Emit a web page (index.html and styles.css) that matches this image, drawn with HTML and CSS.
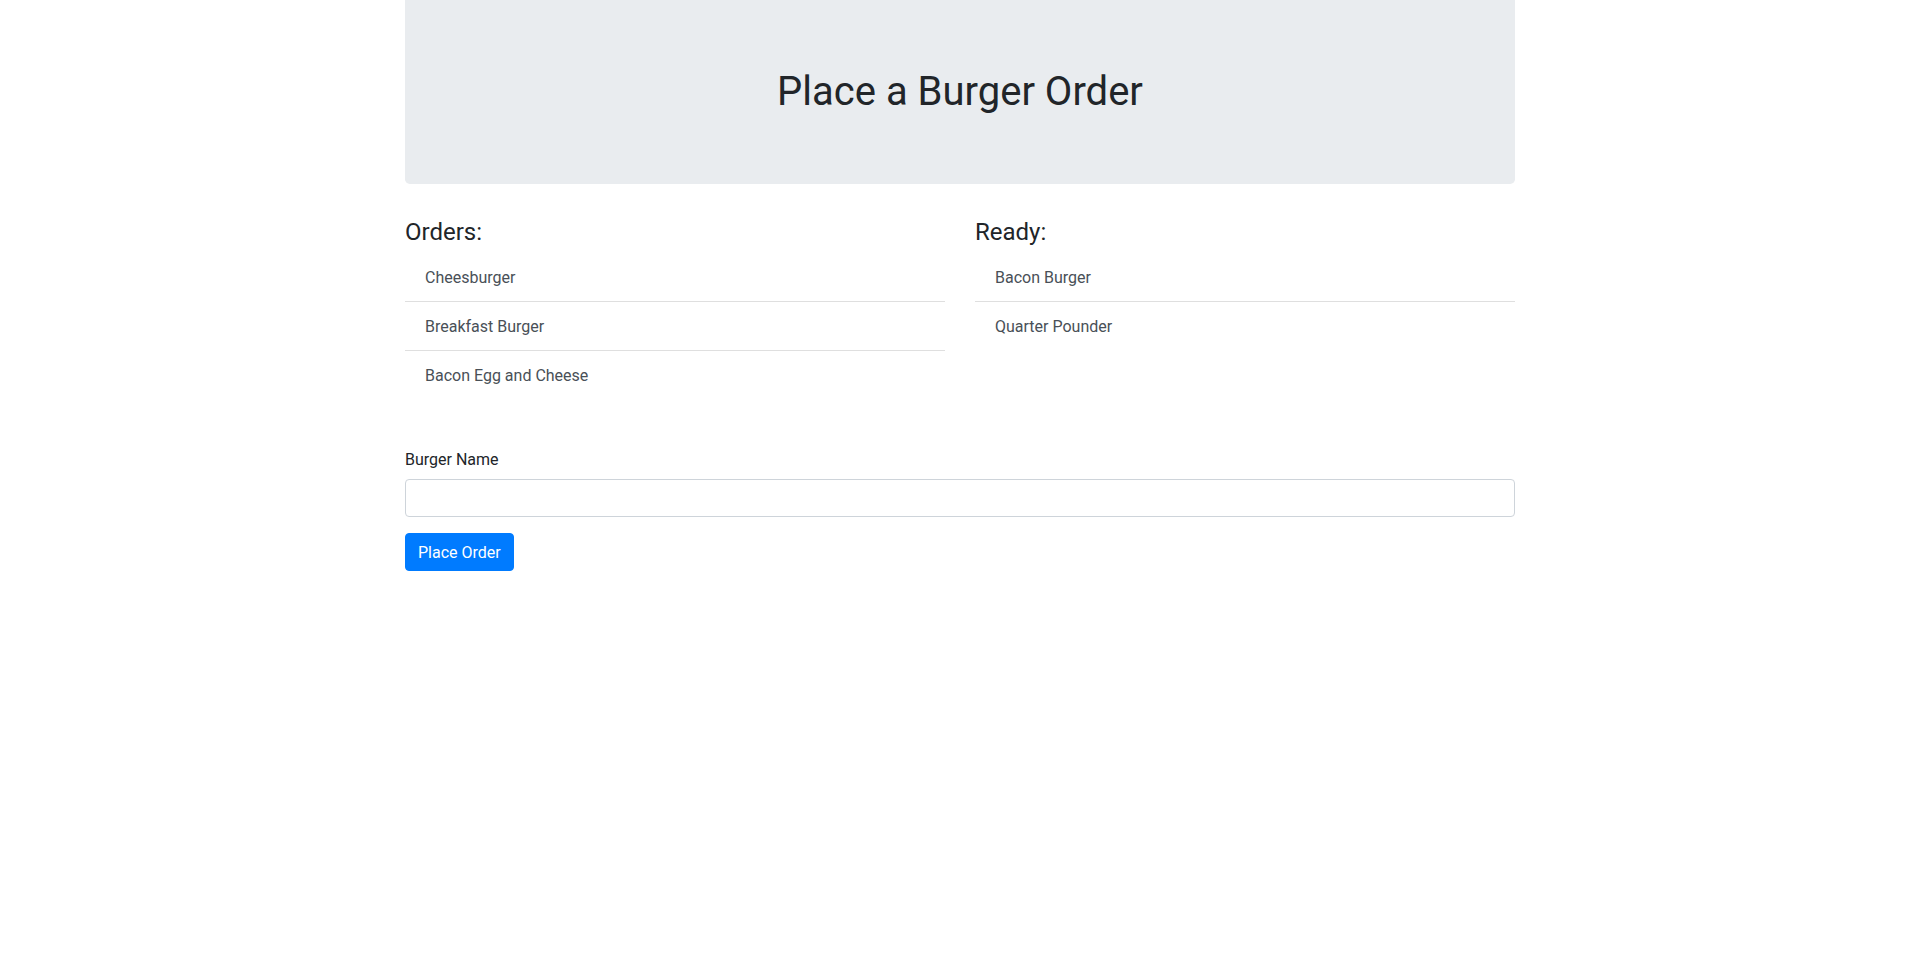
FILE: index.html
```html
<!DOCTYPE html>
<html lang="en">
<head>
<meta charset="utf-8">
<title>Burger Order</title>
<link rel="stylesheet" href="styles.css">
</head>
<body>
<div class="container">
  <div class="jumbotron">
    <h1 class="title">Place a Burger Order</h1>
  </div>
  <div class="row">
    <div class="col">
      <h4 class="col-title">Orders:</h4>
      <ul class="list">
        <li class="item">Cheesburger</li>
        <li class="item">Breakfast Burger</li>
        <li class="item">Bacon Egg and Cheese</li>
      </ul>
    </div>
    <div class="col">
      <h4 class="col-title">Ready:</h4>
      <ul class="list">
        <li class="item">Bacon Burger</li>
        <li class="item">Quarter Pounder</li>
      </ul>
    </div>
  </div>
  <form class="order-form">
    <div class="form-group">
      <label class="label" for="burger">Burger Name</label>
      <input class="input" id="burger" type="text">
    </div>
    <button class="btn" type="button">Place Order</button>
  </form>
</div>
</body>
</html>
```

FILE: styles.css
```css
* { box-sizing: border-box; }
body {
  margin: 0;
  font-family: "Segoe UI", Roboto, "Helvetica Neue", Arial, sans-serif;
  font-size: 16px;
  line-height: 1.5;
  color: #212529;
  background: #fff;
}
.container {
  width: 1140px;
  margin: 0 auto;
  padding: 0 15px;
}
.jumbotron {
  background: #e9ecef;
  border-radius: 0 0 4.8px 4.8px;
  padding: 68px 32px 60px;
  margin-bottom: 32px;
  text-align: center;
}
.title {
  margin: 0 0 8px;
  font-size: 40px;
  font-weight: 400;
  line-height: 1.2;
}
.row {
  display: flex;
  margin: 0 -15px;
}
.col {
  flex: 0 0 50%;
  padding: 0 15px;
}
.col-title {
  margin: 0 0 6px;
  padding-top: 2px;
  font-size: 24px;
  font-weight: 400;
  line-height: 1.2;
}
.list {
  list-style: none;
  margin: 0;
  padding: 0;
}
.item {
  padding: 13px 20px 11px;
  color: #495057;
  border-bottom: 1px solid rgba(0,0,0,.125);
}
.item:last-child { border-bottom: 0; }
.order-form { margin-top: 48px; }
.form-group { margin-bottom: 16px; }
.label {
  display: inline-block;
  padding-top: 1px;
  margin-bottom: 7px;
}
.input {
  display: block;
  width: 100%;
  height: 38px;
  padding: 6px 12px;
  font: inherit;
  color: #495057;
  border: 1px solid #ced4da;
  border-radius: 4px;
  background: #fff;
}
.btn {
  font: inherit;
  color: #fff;
  background: #007bff;
  border: 1px solid #007bff;
  border-radius: 4px;
  padding: 7px 12px 5px;
  line-height: 1.5;
}
```
